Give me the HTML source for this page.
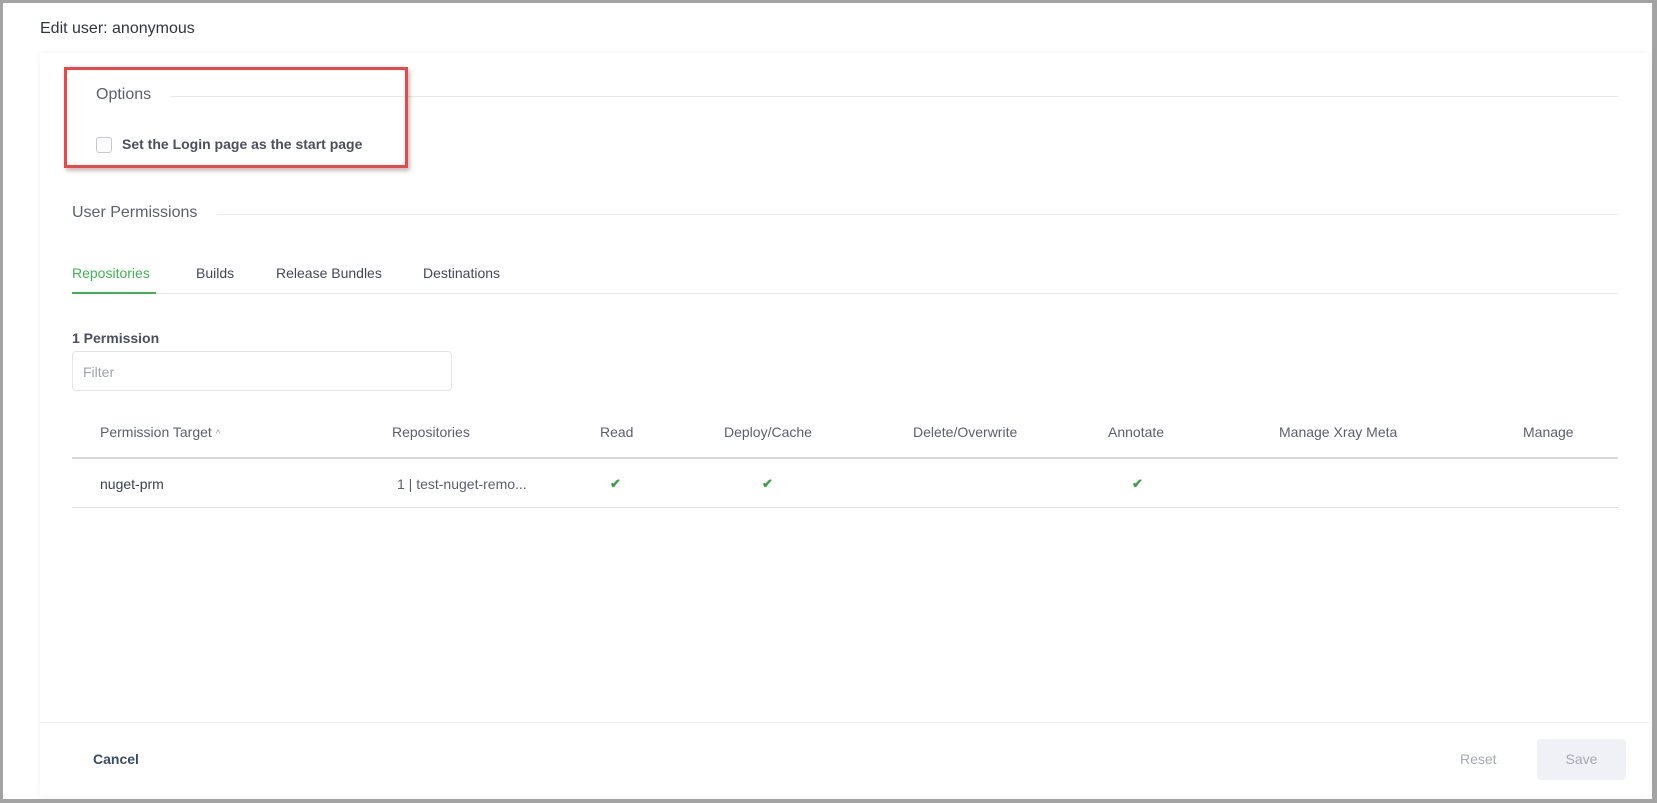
<!DOCTYPE html>
<html><head><meta charset="utf-8"><style>
*{box-sizing:border-box;margin:0;padding:0}
body{width:1657px;height:803px;background:#a3a3a3;font-family:"Liberation Sans",sans-serif;color:#414857;position:relative;overflow:hidden}
.page{position:absolute;left:3px;top:3px;width:1649px;height:796px;background:#fff}
.a{position:absolute;white-space:nowrap}
.card{position:absolute;left:37px;top:50px;width:1609px;height:743px;background:#fff;box-shadow:0 0 6px rgba(0,0,0,.06)}
.line{position:absolute;height:1px;background:#e8e9ef}
.th{position:absolute;top:424px;font-size:14px;color:#5a5f6e}
.chk{position:absolute;top:476px;color:#3aa04a;font-size:13px;font-weight:bold}
</style></head><body>
<div class="page">
<div class="a" style="left:37px;top:17px;font-size:16px;color:#2f3441">Edit user: anonymous</div>
<div class="card"></div>
</div>
<div class="line" style="left:171px;top:96px;width:1447px"></div>
<div class="a" style="left:64px;top:67px;width:344px;height:101px;border:3px solid #f04545;box-shadow:2px 3px 4px rgba(0,0,0,.25)"></div>
<div class="a" style="left:96px;top:86px;font-size:16px;color:#5a6070">Options</div>
<div class="a" style="left:96px;top:137px;width:16px;height:16px;border:1px solid #c6c9d4;border-radius:3px"></div>
<div class="a" style="left:122px;top:136px;font-size:14px;font-weight:bold;color:#4a4f5e">Set the Login page as the start page</div>
<div class="a" style="left:72px;top:204px;font-size:16px;color:#5a6070">User Permissions</div>
<div class="line" style="left:217px;top:214px;width:1401px"></div>
<div class="a" style="left:72px;top:265px;font-size:14px;color:#3fb24f">Repositories</div>
<div class="a" style="left:196px;top:265px;font-size:14px">Builds</div>
<div class="a" style="left:276px;top:265px;font-size:14px">Release Bundles</div>
<div class="a" style="left:423px;top:265px;font-size:14px">Destinations</div>
<div class="line" style="left:72px;top:293px;width:1546px;background:#e3e4ea"></div>
<div class="a" style="left:72px;top:292px;width:84px;height:2px;background:#3fb24f"></div>
<div class="a" style="left:72px;top:330px;font-size:14px;font-weight:bold;color:#4a4f5e">1 Permission</div>
<div class="a" style="left:72px;top:351px;width:380px;height:40px;border:1px solid #e3e4ea;border-radius:4px"></div>
<div class="a" style="left:83px;top:364px;font-size:14px;color:#a0a4ae">Filter</div>
<div class="th" style="left:100px">Permission Target <span style="font-size:10px;color:#999">&#94;</span></div>
<div class="th" style="left:392px">Repositories</div>
<div class="th" style="left:600px">Read</div>
<div class="th" style="left:724px">Deploy/Cache</div>
<div class="th" style="left:913px">Delete/Overwrite</div>
<div class="th" style="left:1108px">Annotate</div>
<div class="th" style="left:1279px">Manage Xray Meta</div>
<div class="th" style="left:1523px">Manage</div>
<div class="line" style="left:72px;top:457px;width:1546px;height:2px;background:#d8d9dd"></div>
<div class="a" style="left:100px;top:476px;font-size:14px;color:#3b4252">nuget-prm</div>
<div class="a" style="left:397px;top:476px;font-size:14px;color:#5a5f6e">1 | test-nuget-remo...</div>
<div class="chk" style="left:610px">&#10004;</div>
<div class="chk" style="left:762px">&#10004;</div>
<div class="chk" style="left:1132px">&#10004;</div>
<div class="line" style="left:72px;top:507px;width:1546px;background:#d8d9dd"></div>
<div class="line" style="left:40px;top:722px;width:1609px;background:#f0f1f4"></div>
<div class="a" style="left:93px;top:751px;font-size:14px;font-weight:bold;color:#3b4a66">Cancel</div>
<div class="a" style="left:1460px;top:751px;font-size:14px;color:#a5a9b3">Reset</div>
<div class="a" style="left:1537px;top:739px;width:89px;height:41px;background:#f0f1f6;border-radius:4px;font-size:14px;color:#a5a9b3;text-align:center;line-height:41px">Save</div>
</body></html>
